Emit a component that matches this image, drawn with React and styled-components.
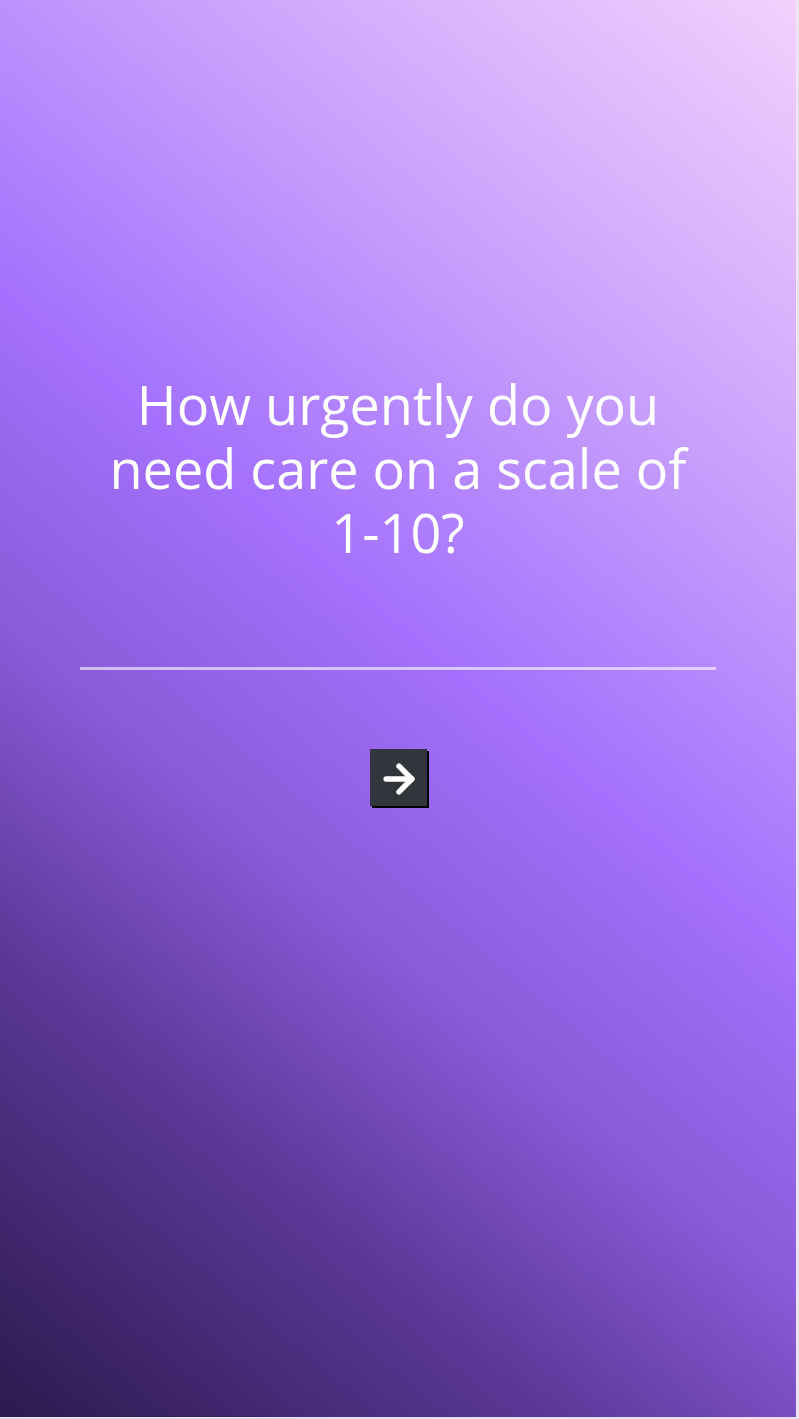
import React, { Component } from 'react';
import styled, { createGlobalStyle } from 'styled-components';
import { ArrowRight } from 'lucide-react';

const GlobalStyle = createGlobalStyle`
  html, body {
    margin: 0;
    padding: 0;
    background: #e9e0ef;
  }
  body {
    font-family: "Open Sans", "Noto Sans", sans-serif;
  }
`;

class App extends Component {
  state = {
    answer: ''
  };

  render() {
    return (
      <>
        <GlobalStyle />
        <Screen>
          <Question>How urgently do you need care on a scale of 1-10?</Question>
          <Answer
            type="text"
            value={this.state.answer}
            onChange={e => this.setState({ answer: e.target.value })}
          />
          <NextButton type="button" aria-label="Next">
            <ArrowRight size={44} strokeWidth={3} color="#ffffff" />
          </NextButton>
        </Screen>
      </>
    );
  }
}

const Screen = styled.div`
  display: flex;
  flex-direction: column;
  align-items: center;
  box-sizing: border-box;
  width: 797px;
  height: 1417px;
  padding: 372px 80px 0 80px;
  border-right: 1px solid #f6eefa;
  background: linear-gradient(
    40deg,
    #2c1a4d 0%,
    #5a3796 22%,
    #8a5ad8 38%,
    #a470fd 54%,
    #c39afc 72%,
    #dcb6fc 86%,
    #f4d0fd 100%
  );
`;

const Question = styled.h1`
  margin: 0;
  width: 100%;
  font-family: "Open Sans", sans-serif;
  font-weight: 400;
  font-size: 54px;
  line-height: 64px;
  color: #ffffff;
  text-align: center;
`;

const Answer = styled.input`
  box-sizing: border-box;
  width: 100%;
  height: 40px;
  margin-top: 66px;
  padding: 0;
  border: none;
  border-bottom: 3px solid rgba(255, 255, 255, 0.6);
  background: transparent;
  color: #ffffff;
  font-family: "Open Sans", sans-serif;
  font-size: 28px;
  outline: none;
`;

const NextButton = styled.button`
  display: flex;
  align-items: center;
  justify-content: center;
  width: 57px;
  height: 57px;
  margin-top: 79px;
  padding: 2px 0 0 2px;
  border: none;
  background: #33353c;
  box-shadow: 2px 2px 0 #000000;
  cursor: pointer;
`;

export default App;
